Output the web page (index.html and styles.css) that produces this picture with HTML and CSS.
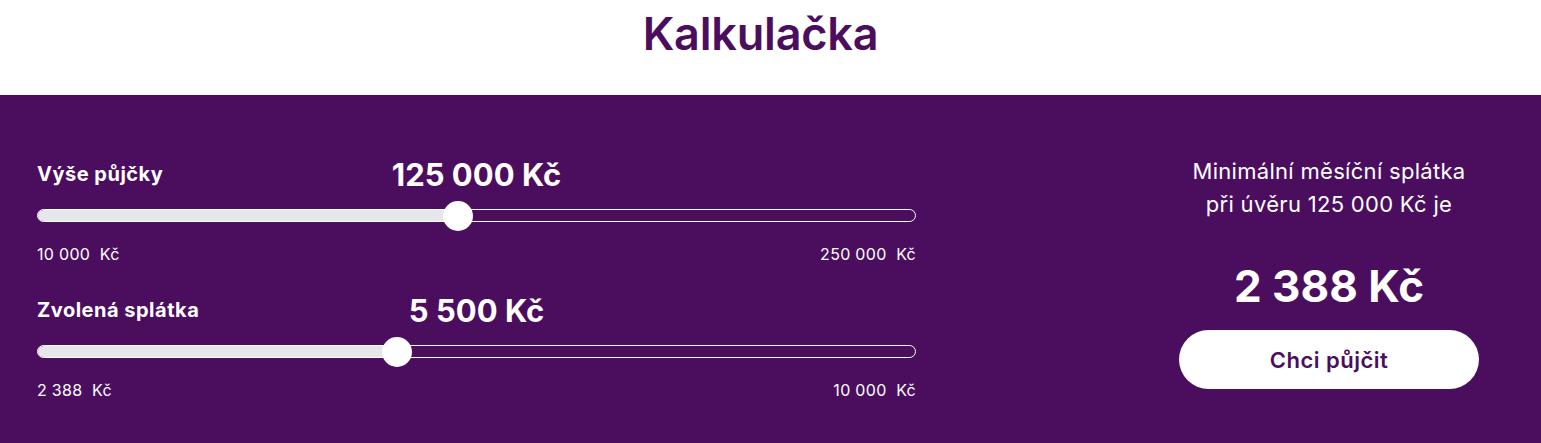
FILE: index.html
```html
<!DOCTYPE html>
<html lang="cs">
<head>
<meta charset="utf-8">
<title>Kalkulačka</title>
<link rel="stylesheet" href="styles.css">
</head>
<body>
<header class="top">
  <h1 class="title">Kalkulačka</h1>
</header>
<section class="calc">
  <div class="sliders">
    <div class="slider">
      <div class="slider-head">
        <span class="slider-label">Výše půjčky</span>
        <span class="slider-value">125 000 Kč</span>
        <span></span>
      </div>
      <div class="track">
        <div class="fill" style="width: 47.9%"><span class="thumb"></span></div>
      </div>
      <div class="range">
        <span>10 000 &nbsp;Kč</span>
        <span>250 000 &nbsp;Kč</span>
      </div>
    </div>
    <div class="slider">
      <div class="slider-head">
        <span class="slider-label">Zvolená splátka</span>
        <span class="slider-value">5 500 Kč</span>
        <span></span>
      </div>
      <div class="track">
        <div class="fill" style="width: 40.9%"><span class="thumb"></span></div>
      </div>
      <div class="range">
        <span>2 388 &nbsp;Kč</span>
        <span>10 000 &nbsp;Kč</span>
      </div>
    </div>
  </div>
  <div class="result">
    <p class="result-text">Minimální měsíční splátka<br>při úvěru 125 000 Kč je</p>
    <p class="result-amount">2 388 Kč</p>
    <a class="cta" href="#">Chci půjčit</a>
  </div>
</section>
</body>
</html>
```
FILE: styles.css
```css
* { box-sizing: border-box; }
html, body { margin: 0; padding: 0; }
body {
  font-family: Inter, "Noto Sans", sans-serif;
  background: #ffffff;
  height: 443px;
  overflow: hidden;
}
.top {
  height: 95px;
  display: flex;
  justify-content: center;
  align-items: flex-start;
  padding-right: 20px;
}
.title {
  margin: 6px 0 0;
  font-size: 45px;
  font-weight: 600;
  color: #4b0e5f;
  letter-spacing: -0.2px;
}
.calc {
  background: #4b0e5f;
  height: 348px;
  display: flex;
  justify-content: space-between;
  padding: 60px 62px 0 37px;
  color: #ffffff;
}
.sliders {
  width: 879px;
  display: flex;
  flex-direction: column;
  gap: 27px;
}
.slider-head {
  display: grid;
  grid-template-columns: 1fr auto 1fr;
  align-items: center;
  height: 38px;
}
.slider-label {
  font-size: 20px;
  font-weight: 700;
  letter-spacing: 0.5px;
}
.slider-value {
  font-size: 31px;
  font-weight: 700;
}
.track {
  margin-top: 16px;
  height: 13px;
  border: 1px solid #ffffff;
  border-radius: 7px;
  position: relative;
}
.fill {
  height: 100%;
  background: #e5e7eb;
  border-radius: 6px 0 0 6px;
  position: relative;
}
.thumb {
  position: absolute;
  right: -15px;
  top: 50%;
  width: 30px;
  height: 30px;
  margin-top: -15px;
  border-radius: 50%;
  background: #ffffff;
}
.range {
  display: flex;
  justify-content: space-between;
  margin-top: 23px;
  font-size: 16px;
  line-height: 19px;
  letter-spacing: 0.3px;
}
.result {
  width: 300px;
  display: flex;
  flex-direction: column;
  align-items: center;
  text-align: center;
}
.result-text {
  margin: 0;
  font-size: 22px;
  line-height: 33px;
  font-weight: 400;
  white-space: nowrap;
  letter-spacing: 0.3px;
}
.result-amount {
  margin: 39px 0 0;
  font-size: 44px;
  font-weight: 700;
  line-height: 52px;
}
.cta {
  margin-top: 18px;
  width: 300px;
  height: 59px;
  border-radius: 30px;
  background: #ffffff;
  color: #4b0e5f;
  text-decoration: none;
  font-size: 22px;
  font-weight: 600;
  letter-spacing: 0.5px;
  display: flex;
  align-items: center;
  justify-content: center;
}
```
